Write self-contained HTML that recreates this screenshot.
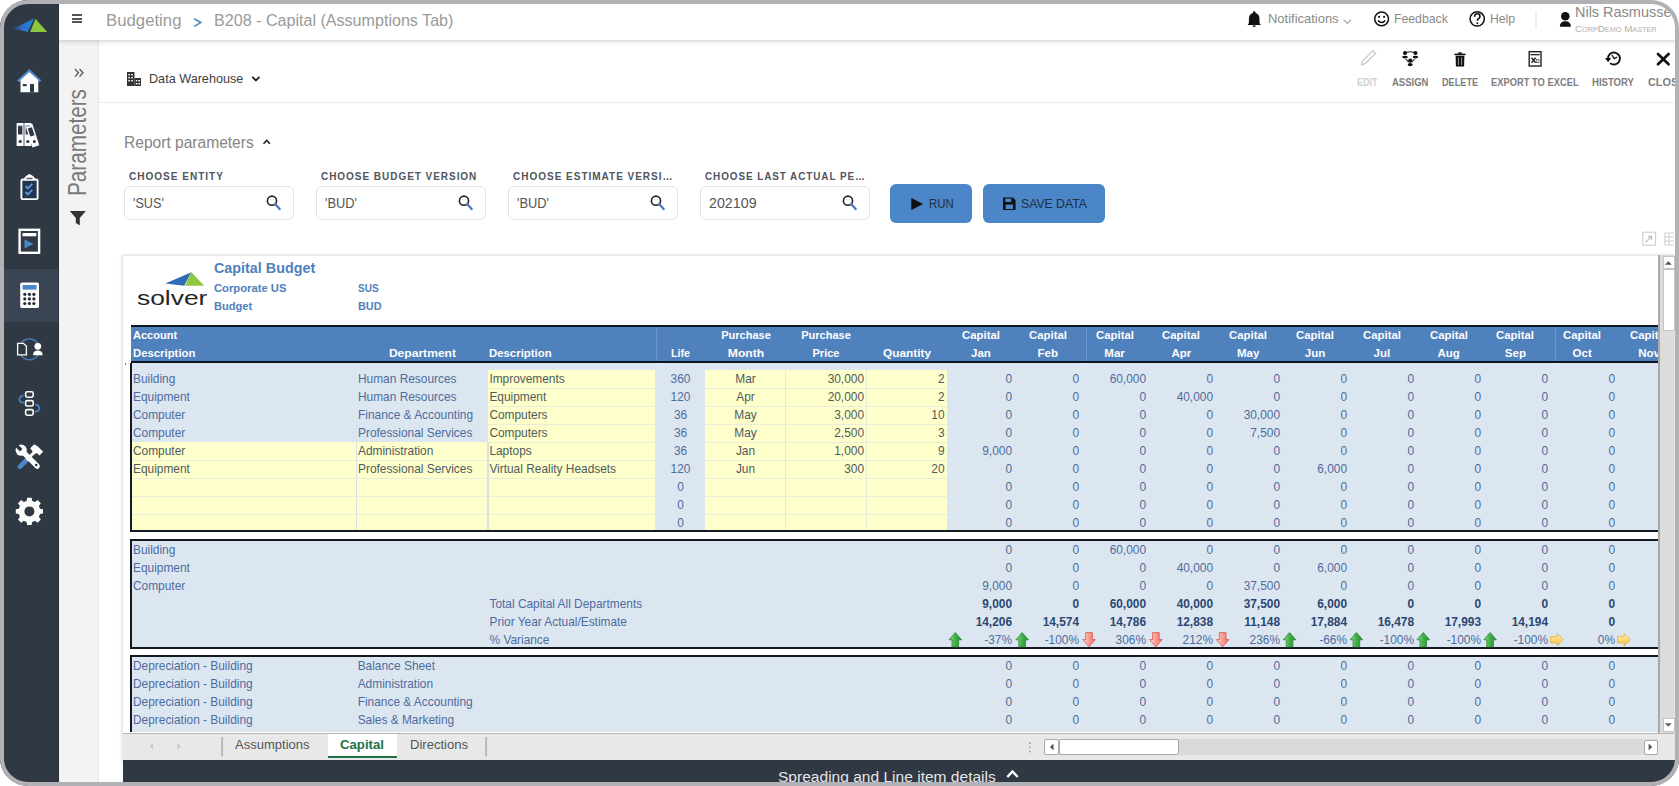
<!DOCTYPE html>
<html><head><meta charset="utf-8"><style>
html,body{margin:0;padding:0;width:1679px;height:786px;overflow:hidden;background:#fff}
.t{position:absolute;white-space:nowrap;font-family:"Liberation Sans",sans-serif}
.r{position:absolute}
#frame{position:absolute;left:0;top:0;width:1679px;height:786px;box-sizing:border-box;border:4px solid #b1b2b6;border-radius:28px;box-shadow:0 0 0 40px #fff;pointer-events:none;z-index:100}
</style></head><body>
<div class="r" style="left:0px;top:0px;width:59px;height:786px;background:#2f3843"></div>
<div class="r" style="left:4px;top:269px;width:55px;height:53px;background:#3a4452"></div>
<div class="r" style="left:57.5px;top:0px;width:1.5px;height:786px;background:#272f38"></div>
<svg class="r" style="left:8px;top:14px" width="44" height="22" viewBox="8 14 44 22">
<defs><linearGradient id="lg1" x1="0" x2="1" y1="0" y2="0"><stop offset="0" stop-color="#2d5fa8" stop-opacity="0.3"/><stop offset="0.45" stop-color="#2f6fd0"/><stop offset="1" stop-color="#1f86d6"/></linearGradient></defs><path d="M12.6 29.1 L34.2 18.4 L27.6 31.9 Q20 29.8 12.6 29.1 Z" fill="url(#lg1)"/><path d="M35.5 18.8 L47.2 32 L30.2 31.9 Z" fill="#8cc63f"/></svg>
<svg class="r" style="left:0;top:0" width="59" height="560" viewBox="0 0 59 560">
<!-- home -->
<path d="M17 80.5 L29.3 69 L41.5 80.5 L39.5 82.3 L29.3 72.8 L19 82.3 Z" fill="#4a86c8"/>
<path d="M20.5 80 L29.3 72 L38.3 80 L38.3 92.3 L20.5 92.3 Z" fill="#fdfdfd"/>
<rect x="30" y="84" width="4" height="8.3" fill="#2f3843"/><rect x="22.8" y="84" width="3.8" height="2.2" fill="#2f3843"/>
<!-- binders -->
<rect x="16.6" y="123" width="7" height="23" fill="#fdfdfd"/><rect x="24.4" y="123" width="7" height="23" fill="#fdfdfd"/>
<rect x="18" y="126" width="4.4" height="8.5" fill="#2f3843"/><rect x="25.6" y="126" width="4.4" height="8.5" fill="#2f3843"/>
<g transform="rotate(-18 37 146)"><rect x="32.2" y="123.5" width="7.2" height="22.5" fill="#fdfdfd"/><rect x="33.6" y="126.5" width="4.4" height="8.5" fill="#2f3843"/><circle cx="35.8" cy="141" r="1.5" fill="#2f3843"/></g>
<path d="M18 126 h4.4 M25.6 126 h4.4" stroke="#4a86c8" stroke-width="1"/>
<circle cx="20.2" cy="141.5" r="1.6" fill="#2f3843"/><circle cx="27.8" cy="141.5" r="1.6" fill="#2f3843"/>
<!-- clipboard -->
<rect x="21.4" y="179.5" width="16.2" height="19.6" rx="1.2" fill="#1f3550" stroke="#fdfdfd" stroke-width="1.9"/>
<path d="M23.5 180.5 Q24 176 29.5 174 Q35 176 35.5 180.5 Z" fill="#fdfdfd"/><rect x="26.5" y="177.8" width="6" height="1.4" fill="#555"/>
<path d="M25.5 186 l2.3 2.3 l4.5 -4.5 M25.5 192 l2.3 2.3 l4.5 -4.5" fill="none" stroke="#5a97d8" stroke-width="1.9"/>
<!-- play -->
<rect x="19.6" y="229.8" width="19.5" height="23" fill="none" stroke="#fdfdfd" stroke-width="2.4"/>
<rect x="22.5" y="233" width="13.8" height="3.3" fill="#fdfdfd"/>
<path d="M24.5 239.3 L33.5 244 L24.5 248.6 Z" fill="#4a86c8"/>
<!-- calculator -->
<rect x="20.2" y="282.6" width="18.8" height="25.4" rx="1.8" fill="#fdfdfd"/>
<rect x="22.6" y="285" width="14" height="4.6" fill="#4a86c8"/>
<g fill="#222a33"><circle cx="24.8" cy="294.3" r="1.6"/><circle cx="29.4" cy="294.3" r="1.6"/><circle cx="33.9" cy="294.3" r="1.6"/>
<circle cx="24.8" cy="298.9" r="1.6"/><circle cx="29.4" cy="298.9" r="1.6"/><circle cx="33.9" cy="298.9" r="1.6"/>
<circle cx="24.8" cy="303.5" r="1.6"/><circle cx="29.4" cy="303.5" r="1.6"/><circle cx="33.9" cy="303.5" r="1.6"/></g>
<!-- doc-user -->
<path d="M20.5 344.2 A10.3 10.3 0 0 1 38.3 344.2 M38.3 354.6 A10.3 10.3 0 0 1 20.5 354.6" fill="none" stroke="#4a86c8" stroke-width="1.5" opacity="0.85"/>
<path d="M17.6 343.3 h5.8 l3 3 v8.6 h-8.8 Z" fill="#2f3843" stroke="#fdfdfd" stroke-width="1.3"/>
<circle cx="37.8" cy="346.3" r="3.4" fill="#fdfdfd"/><path d="M33 355.2 Q33 350.6 37.8 350.6 Q42.6 350.6 42.6 355.2 Z" fill="#fdfdfd"/>
<!-- nodes -->
<path d="M23.5 395.5 Q19 396.5 19.5 400 Q20.5 403 24 402.5 M35.3 404.5 Q39.8 405.5 39.3 409 Q38.3 412 34.8 411.5" fill="none" stroke="#4a86c8" stroke-width="1.8" opacity="0.9"/>
<rect x="25.6" y="391.8" width="7.6" height="5.4" rx="1.6" fill="#2f3843" stroke="#fdfdfd" stroke-width="1.6"/>
<rect x="25.6" y="400.6" width="7.6" height="5.4" rx="1.6" fill="#2f3843" stroke="#fdfdfd" stroke-width="1.6"/>
<rect x="25.6" y="409.6" width="7.6" height="5.6" rx="1.6" fill="#2f3843" stroke="#fdfdfd" stroke-width="1.6"/>
<!-- tools -->
<path d="M20 466.6 L26.6 460" stroke="#4a86c8" stroke-width="4.8" stroke-linecap="round"/>
<path d="M26.6 460 L35.5 451" stroke="#fdfdfd" stroke-width="3"/>
<path d="M30.2 448.3 L34.2 444.3 L37.6 446.2 L43.2 451.8 L39.4 455.6 L36.6 452.8 L34.8 454.6 Z" fill="#fdfdfd"/>
<path d="M21.2 450.2 L37.2 466.2" stroke="#fdfdfd" stroke-width="5.2" stroke-linecap="round"/>
<circle cx="21.2" cy="450.2" r="5.6" fill="#fdfdfd"/>
<path d="M21.2 450.2 L15.8 444.8" stroke="#2f3843" stroke-width="3.6"/>
<circle cx="36.2" cy="465" r="1.3" fill="#2f3843"/>
<!-- gear -->
<g transform="translate(29.4 511.4)">
<path d="M-2.2 -12.5 L2.2 -12.5 L2.8 -9.3 L5.6 -8.2 L8.3 -10.1 L11.4 -7 L9.5 -4.3 L10.6 -1.5 L13.6 -1 L13.6 3.4 L10.6 3.9 L9.5 6.7 L11.4 9.4 L8.3 12.5 L5.6 10.6 L2.8 11.7 L2.2 14.8 L-2.2 14.8 L-2.8 11.7 L-5.6 10.6 L-8.3 12.5 L-11.4 9.4 L-9.5 6.7 L-10.6 3.9 L-13.6 3.4 L-13.6 -1 L-10.6 -1.5 L-9.5 -4.3 L-11.4 -7 L-8.3 -10.1 L-5.6 -8.2 L-2.8 -9.3 Z" fill="#fdfdfd" transform="translate(0 -1.2)"/>
<circle cx="0" cy="0" r="5" fill="#2f3843"/>
</g>
</svg>
<div class="r" style="left:59px;top:0px;width:1620px;height:40px;background:#fff"></div>
<div class="r" style="left:72px;top:14.0px;width:10px;height:2px;background:#555"></div>
<div class="r" style="left:72px;top:17.6px;width:10px;height:2px;background:#555"></div>
<div class="r" style="left:72px;top:21.2px;width:10px;height:2px;background:#555"></div>
<div class="t" style="left:105.5px;top:11.58px;font-size:16.6px;line-height:18.54px;color:#9a9a9a;font-weight:normal;transform:scaleX(1.0098);transform-origin:left center;">Budgeting</div>
<svg class="r" style="left:190px;top:15px" width="16" height="14" viewBox="190 15 16 14"><path d="M194.2 18.8 L200.8 22.6 L194.2 26.4" fill="none" stroke="#4a86c8" stroke-width="1.6"/></svg>
<div class="t" style="left:213.6px;top:12.12px;font-size:16px;line-height:17.87px;color:#9a9a9a;font-weight:normal;transform:scaleX(1.0057);transform-origin:left center;">B208 - Capital (Assumptions Tab)</div>
<div class="r" style="left:59px;top:40px;width:40px;height:746px;background:#f3f3f3;border-right:1px solid #e4e4e4;box-sizing:border-box"></div>
<div class="r" style="left:99px;top:41px;width:1580px;height:745px;background:#fff"></div>
<div class="r" style="left:99px;top:102px;width:1580px;height:1px;background:#ececec"></div>
<div class="r" style="left:59px;top:40px;width:1620px;height:6px;background:linear-gradient(rgba(0,0,0,0.13),rgba(0,0,0,0.04) 50%,rgba(0,0,0,0))"></div>
<svg class="r" style="left:1240px;top:4px" width="440" height="36" viewBox="1240 4 440 36">
<path d="M1254.2 11.3 a1.3 1.3 0 0 1 1.3 1.3 v0.4 q4 1 4 6 v4 l1.3 2 h-13.2 l1.3 -2 v-4 q0 -5 4 -6 v-0.4 a1.3 1.3 0 0 1 1.3 -1.3 Z" fill="#111"/>
<path d="M1252.6 25.4 a1.6 1.6 0 0 0 3.2 0 Z" fill="#111"/>
<path d="M1343.6 19.6 l3.7 3.8 l3.7 -3.8" fill="none" stroke="#aaa" stroke-width="1.3"/>
<circle cx="1381.6" cy="18.8" r="6.9" fill="none" stroke="#111" stroke-width="1.5"/>
<circle cx="1379.1" cy="16.8" r="1.1" fill="#111"/><circle cx="1384.1" cy="16.8" r="1.1" fill="#111"/>
<path d="M1377.9 20.4 q3.7 4 7.4 0" fill="none" stroke="#111" stroke-width="1.5"/>
<circle cx="1477.2" cy="18.9" r="7.1" fill="none" stroke="#111" stroke-width="1.5"/>
<path d="M1474.6 16.8 q0 -3 2.7 -3 q2.7 0 2.7 2.6 q0 1.6 -1.6 2.4 q-1 0.6 -1 2" fill="none" stroke="#111" stroke-width="1.6"/>
<circle cx="1477.3" cy="23.3" r="1" fill="#111"/>
<rect x="1535.5" y="10.5" width="1" height="19" fill="#ddd"/>
<circle cx="1565.3" cy="16.2" r="4.3" fill="#111"/>
<path d="M1559.8 26.8 q0 -5.6 5.5 -5.6 q5.6 0 5.6 5.6 Z" fill="#111"/>
</svg>
<div class="t" style="left:1267.6px;top:12.23px;font-size:13px;line-height:14.52px;color:#8a8a8a;font-weight:normal;transform:scaleX(0.9970);transform-origin:left center;">Notifications</div>
<div class="t" style="left:1394.0px;top:12.23px;font-size:13px;line-height:14.52px;color:#8a8a8a;font-weight:normal;transform:scaleX(0.9423);transform-origin:left center;">Feedback</div>
<div class="t" style="left:1490.3px;top:12.23px;font-size:13px;line-height:14.52px;color:#8a8a8a;font-weight:normal;transform:scaleX(0.9388);transform-origin:left center;">Help</div>
<div class="t" style="left:1574.5px;top:4.66px;font-size:14.3px;line-height:15.97px;color:#8a8a8a;font-weight:normal;transform:scaleX(1.0115);transform-origin:left center;">Nils Rasmussen</div>
<div class="t" style="left:1574.5px;top:24.2px;font-size:9.4px;line-height:10px;color:#b0b0b0;font-variant:small-caps;transform:scaleX(1.04);transform-origin:left center">CorpDemo Master</div>
<svg class="r" style="left:1350px;top:44px" width="330" height="30" viewBox="1350 44 330 30">
<path d="M1361.5 64.7 l1 -3.6 l10.5 -10.5 l2.6 2.6 l-10.5 10.5 Z" fill="none" stroke="#c8c8c8" stroke-width="1.3"/>
<path d="M1406.5 52.6 Q1410.3 50.8 1414 52.6 M1405.8 59 L1408.6 62.2 M1414.6 59 L1411.8 62.2" fill="none" stroke="#222" stroke-width="1.1"/>
<g fill="#111">
<circle cx="1405" cy="53" r="2.1"/><circle cx="1415.4" cy="53" r="2.1"/>
<ellipse cx="1405" cy="57.1" rx="2.8" ry="1.4"/><ellipse cx="1415.4" cy="57.1" rx="2.8" ry="1.4"/>
<circle cx="1410.2" cy="60.7" r="2.1"/><ellipse cx="1410.2" cy="64.6" rx="2.5" ry="1.6"/>
</g>
<g fill="#111"><rect x="1454.5" y="53.6" width="11" height="1.6"/><rect x="1458.3" y="52.3" width="3.4" height="1.6"/>
<path d="M1455.6 55.8 h8.8 l-0.3 10.6 h-8.2 Z"/></g>
<path d="M1458.4 57.3 v7.7 M1461.6 57.3 v7.7" stroke="#9a9a9a" stroke-width="1"/>
<rect x="1529.2" y="51.7" width="11.8" height="14.3" fill="none" stroke="#222" stroke-width="1.4"/>
<rect x="1530.5" y="54" width="9.2" height="1.3" fill="#222"/>
<path d="M1531.6 57.8 L1535.6 62.8 M1535.6 57.8 L1531.6 62.8" stroke="#222" stroke-width="1.5"/>
<rect x="1536.3" y="59.6" width="2.6" height="3" fill="none" stroke="#555" stroke-width="0.8"/>
<path d="M1608 59 A6 6 0 1 1 1610.1 63.1" fill="none" stroke="#111" stroke-width="1.9"/>
<path d="M1605 58 L1611.2 58 L1608.1 62.2 Z" fill="#111"/>
<path d="M1612 55 L1614.2 58.6 L1617.2 57.2" fill="none" stroke="#111" stroke-width="1.3"/>
<path d="M1658 54 L1668.6 64.2 M1668.6 54 L1658 64.2" stroke="#111" stroke-width="2.7" stroke-linecap="round"/>
</svg>
<div class="t" style="left:1357.4px;top:76.92px;font-size:10.7px;line-height:11.95px;color:#cfcfcf;font-weight:bold;transform:scaleX(0.8411);transform-origin:left center;">EDIT</div>
<div class="t" style="left:1391.8px;top:76.92px;font-size:10.7px;line-height:11.95px;color:#7d7d7d;font-weight:bold;transform:scaleX(0.8873);transform-origin:left center;">ASSIGN</div>
<div class="t" style="left:1441.8px;top:76.92px;font-size:10.7px;line-height:11.95px;color:#7d7d7d;font-weight:bold;transform:scaleX(0.8552);transform-origin:left center;">DELETE</div>
<div class="t" style="left:1491.3px;top:76.92px;font-size:10.7px;line-height:11.95px;color:#7d7d7d;font-weight:bold;transform:scaleX(0.8745);transform-origin:left center;">EXPORT TO EXCEL</div>
<div class="t" style="left:1592.0px;top:76.92px;font-size:10.7px;line-height:11.95px;color:#7d7d7d;font-weight:bold;transform:scaleX(0.8942);transform-origin:left center;">HISTORY</div>
<div class="t" style="left:1647.7px;top:76.92px;font-size:10.7px;line-height:11.95px;color:#7d7d7d;font-weight:bold;transform:scaleX(1.0173);transform-origin:left center;">CLOSE</div>
<svg class="r" style="left:120px;top:66px" width="150" height="26" viewBox="120 66 150 26">
<g fill="#333">
<rect x="127" y="72" width="7.5" height="14" />
<rect x="134.5" y="78" width="6.5" height="8" />
</g>
<g fill="#fff"><rect x="128.3" y="74" width="1.6" height="1.4"/><rect x="131.2" y="74" width="1.6" height="1.4"/>
<rect x="128.3" y="77" width="1.6" height="1.4"/><rect x="131.2" y="77" width="1.6" height="1.4"/>
<rect x="128.3" y="80" width="1.6" height="1.4"/><rect x="131.2" y="80" width="1.6" height="1.4"/>
<rect x="135.8" y="80" width="1.6" height="1.4"/><rect x="138.4" y="80" width="1.6" height="1.4"/>
<rect x="135.8" y="83" width="1.6" height="1.4"/><rect x="138.4" y="83" width="1.6" height="1.4"/></g>
<path d="M252.3 76.8 l3.6 3.6 l3.6 -3.6" fill="none" stroke="#222" stroke-width="1.8"/>
</svg>
<div class="t" style="left:149.0px;top:72.23px;font-size:13px;line-height:14.52px;color:#404040;font-weight:normal;transform:scaleX(0.9715);transform-origin:left center;">Data Warehouse</div>
<svg class="r" style="left:59px;top:60px" width="40" height="180" viewBox="59 60 40 180">
<path d="M75 69 l3.5 3.8 l-3.5 3.8 M79.5 69 l3.5 3.8 l-3.5 3.8" fill="none" stroke="#555" stroke-width="1.3"/>
<path d="M69.8 211 h16 l-6 7 v7.3 l-4 -2.3 v-5 Z" fill="#333"/>
</svg>
<div class="t" style="left:66.3px;top:195.8px;font-size:20.7px;line-height:20.7px;color:#7a7a7a;transform:rotate(-90deg) scaleY(1.2);transform-origin:left top">Parameters</div>
<div class="t" style="left:123.6px;top:133.88px;font-size:15.6px;line-height:17.43px;color:#858585;font-weight:normal;transform:scaleX(0.9980);transform-origin:left center;">Report parameters</div>
<svg class="r" style="left:260px;top:136px" width="14" height="12" viewBox="260 136 14 12">
<path d="M263.5 143.8 l3.2 -3.3 l3.2 3.3" fill="none" stroke="#222" stroke-width="1.6"/></svg>
<div class="r" style="left:124px;top:186px;width:170px;height:34px;box-sizing:border-box;border:1.5px solid #e3e3e3;border-radius:6px;background:#fff"></div>
<div class="t" style="left:129.0px;top:171.10px;font-size:10.5px;line-height:11.73px;color:#50565c;font-weight:bold;transform:scaleX(0.9609);transform-origin:left center;letter-spacing:1.0px;">CHOOSE ENTITY</div>
<div class="t" style="left:133.2px;top:195.53px;font-size:14px;line-height:15.64px;color:#555;font-weight:normal;transform:scaleX(0.9023);transform-origin:left center;">'SUS'</div>
<svg class="r" style="left:264.8px;top:193px" width="20" height="22" viewBox="264.8 193 20 22">
<circle cx="271.8" cy="200.7" r="4.6" fill="none" stroke="#222" stroke-width="1.6"/>
<path d="M275.0 204 L279.40000000000003 209" stroke="#4a7bb7" stroke-width="2.4" stroke-linecap="round"/></svg>
<div class="r" style="left:316px;top:186px;width:170px;height:34px;box-sizing:border-box;border:1.5px solid #e3e3e3;border-radius:6px;background:#fff"></div>
<div class="t" style="left:321.0px;top:171.10px;font-size:10.5px;line-height:11.73px;color:#50565c;font-weight:bold;transform:scaleX(0.9534);transform-origin:left center;letter-spacing:1.0px;">CHOOSE BUDGET VERSION</div>
<div class="t" style="left:325.2px;top:195.53px;font-size:14px;line-height:15.64px;color:#555;font-weight:normal;transform:scaleX(0.9167);transform-origin:left center;">'BUD'</div>
<svg class="r" style="left:456.8px;top:193px" width="20" height="22" viewBox="456.8 193 20 22">
<circle cx="463.8" cy="200.7" r="4.6" fill="none" stroke="#222" stroke-width="1.6"/>
<path d="M467.0 204 L471.40000000000003 209" stroke="#4a7bb7" stroke-width="2.4" stroke-linecap="round"/></svg>
<div class="r" style="left:508px;top:186px;width:170px;height:34px;box-sizing:border-box;border:1.5px solid #e3e3e3;border-radius:6px;background:#fff"></div>
<div class="t" style="left:513.0px;top:171.10px;font-size:10.5px;line-height:11.73px;color:#50565c;font-weight:bold;transform:scaleX(0.9573);transform-origin:left center;letter-spacing:1.0px;">CHOOSE ESTIMATE VERSI…</div>
<div class="t" style="left:517.2px;top:195.53px;font-size:14px;line-height:15.64px;color:#555;font-weight:normal;transform:scaleX(0.9167);transform-origin:left center;">'BUD'</div>
<svg class="r" style="left:648.8px;top:193px" width="20" height="22" viewBox="648.8 193 20 22">
<circle cx="655.8" cy="200.7" r="4.6" fill="none" stroke="#222" stroke-width="1.6"/>
<path d="M659.0 204 L663.4 209" stroke="#4a7bb7" stroke-width="2.4" stroke-linecap="round"/></svg>
<div class="r" style="left:700px;top:186px;width:170px;height:34px;box-sizing:border-box;border:1.5px solid #e3e3e3;border-radius:6px;background:#fff"></div>
<div class="t" style="left:705.0px;top:171.10px;font-size:10.5px;line-height:11.73px;color:#50565c;font-weight:bold;transform:scaleX(0.9417);transform-origin:left center;letter-spacing:1.0px;">CHOOSE LAST ACTUAL PE…</div>
<div class="t" style="left:709.2px;top:195.53px;font-size:14px;line-height:15.64px;color:#555;font-weight:normal;transform:scaleX(1.0189);transform-origin:left center;">202109</div>
<svg class="r" style="left:840.8px;top:193px" width="20" height="22" viewBox="840.8 193 20 22">
<circle cx="847.8" cy="200.7" r="4.6" fill="none" stroke="#222" stroke-width="1.6"/>
<path d="M851.0 204 L855.4 209" stroke="#4a7bb7" stroke-width="2.4" stroke-linecap="round"/></svg>
<div class="r" style="left:890px;top:183.5px;width:82px;height:39px;background:#4a86c8;border-radius:6px"></div>
<div class="r" style="left:983px;top:183.5px;width:122px;height:39px;background:#4a86c8;border-radius:6px"></div>
<svg class="r" style="left:900px;top:190px" width="130" height="26" viewBox="900 190 130 26">
<path d="M911.3 198 L923 204 L911.3 210 Z" fill="#111"/>
<path d="M1003 197.5 h9.8 l2.8 2.8 v9.7 h-12.6 Z" fill="#111"/>
<rect x="1005.3" y="198.6" width="6" height="3.4" fill="#4a86c8"/>
<rect x="1005.6" y="204.6" width="7.4" height="4.4" fill="#4a86c8"/>
</svg>
<div class="t" style="left:929.0px;top:196.63px;font-size:13px;line-height:14.52px;color:#1f2f44;font-weight:normal;transform:scaleX(0.8770);transform-origin:left center;">RUN</div>
<div class="t" style="left:1021.3px;top:196.63px;font-size:13px;line-height:14.52px;color:#1f2f44;font-weight:normal;transform:scaleX(0.9404);transform-origin:left center;">SAVE DATA</div>
<div class="r" style="left:123px;top:255.5px;width:1551px;height:505px;background:#fff;box-shadow:0 0 3px 1px rgba(0,0,0,0.16)"></div>
<svg class="r" style="left:160px;top:268px" width="50" height="20" viewBox="160 268 50 20">
<path d="M165.3 283.4 L191.3 272.2 L184.3 285.8 Z" fill="#2e6db4"/>
<path d="M191.3 272.2 L204.2 285.8 L185.2 285.8 Z" fill="#8dc63f"/>
</svg>
<div class="t" style="left:136.6px;top:287.05px;font-size:20.5px;line-height:22.90px;color:#262626;font-weight:normal;transform:scaleX(1.2874);transform-origin:left center;">solver</div>
<div class="t" style="left:213.8px;top:261.46px;font-size:14.3px;line-height:15.97px;color:#4f81bd;font-weight:bold;transform:scaleX(1.0030);transform-origin:left center;">Capital Budget</div>
<div class="t" style="left:213.8px;top:281.59px;font-size:11.5px;line-height:12.85px;color:#4f81bd;font-weight:bold;transform:scaleX(0.9781);transform-origin:left center;">Corporate US</div>
<div class="t" style="left:213.8px;top:299.89px;font-size:11.5px;line-height:12.85px;color:#4f81bd;font-weight:bold;transform:scaleX(0.9645);transform-origin:left center;">Budget</div>
<div class="t" style="left:357.9px;top:281.59px;font-size:11.5px;line-height:12.85px;color:#4f81bd;font-weight:bold;transform:scaleX(0.8754);transform-origin:left center;">SUS</div>
<div class="t" style="left:357.9px;top:299.89px;font-size:11.5px;line-height:12.85px;color:#4f81bd;font-weight:bold;transform:scaleX(0.9472);transform-origin:left center;">BUD</div>
<div class="r" style="left:131px;top:325px;width:1527px;height:2px;background:#0f1722"></div>
<div class="r" style="left:131px;top:327px;width:1527px;height:34px;background:#4f81bd"></div>
<div class="r" style="left:131px;top:360.5px;width:1527px;height:2px;background:#0c1520"></div>
<div class="r" style="left:124.6px;top:363px;width:1.6px;height:1.6px;background:#555;border-radius:1px"></div>
<div class="r" style="left:132px;top:362.5px;width:1526px;height:1.2px;background:#f3f6fa"></div>
<div class="r" style="left:655.5px;top:327px;width:1px;height:33.5px;background:#6a96cc"></div>
<div class="r" style="left:1086px;top:327px;width:1px;height:33.5px;background:#6a96cc"></div>
<div class="r" style="left:1555px;top:327px;width:1px;height:33.5px;background:#6a96cc"></div>
<div class="t" style="left:133.0px;top:329.29px;font-size:11.5px;line-height:12.85px;color:#fdfdfd;font-weight:bold;transform:scaleX(0.9608);transform-origin:left center;">Account</div>
<div class="t" style="left:133.0px;top:347.09px;font-size:11.5px;line-height:12.85px;color:#fdfdfd;font-weight:bold;transform:scaleX(0.9864);transform-origin:left center;">Description</div>
<div class="t" style="left:55.7px;width:400px;text-align:right;top:347.09px;font-size:11.5px;line-height:12.85px;color:#fdfdfd;font-weight:bold;transform:scaleX(1.0500);transform-origin:right center;">Department</div>
<div class="t" style="left:489.4px;top:347.09px;font-size:11.5px;line-height:12.85px;color:#fdfdfd;font-weight:bold;transform:scaleX(0.9895);transform-origin:left center;">Description</div>
<div class="t" style="left:290.0px;width:400px;text-align:right;top:347.09px;font-size:11.5px;line-height:12.85px;color:#fdfdfd;font-weight:bold;transform:scaleX(0.9293);transform-origin:right center;">Life</div>
<div class="t" style="left:545.5px;width:400px;text-align:center;top:329.29px;font-size:11.5px;line-height:12.85px;color:#fdfdfd;font-weight:bold;transform:scaleX(0.9560);transform-origin:center center;">Purchase</div>
<div class="t" style="left:545.5px;width:400px;text-align:center;top:347.09px;font-size:11.5px;line-height:12.85px;color:#fdfdfd;font-weight:bold;transform:scaleX(1.0526);transform-origin:center center;">Month</div>
<div class="t" style="left:626.3px;width:400px;text-align:center;top:329.29px;font-size:11.5px;line-height:12.85px;color:#fdfdfd;font-weight:bold;transform:scaleX(0.9560);transform-origin:center center;">Purchase</div>
<div class="t" style="left:626.3px;width:400px;text-align:center;top:347.09px;font-size:11.5px;line-height:12.85px;color:#fdfdfd;font-weight:bold;transform:scaleX(0.9597);transform-origin:center center;">Price</div>
<div class="t" style="left:707.0px;width:400px;text-align:center;top:347.09px;font-size:11.5px;line-height:12.85px;color:#fdfdfd;font-weight:bold;transform:scaleX(1.0291);transform-origin:center center;">Quantity</div>
<div class="t" style="left:781.0px;width:400px;text-align:center;top:329.29px;font-size:11.5px;line-height:12.85px;color:#fdfdfd;font-weight:bold;transform:scaleX(0.9859);transform-origin:center center;">Capital</div>
<div class="t" style="left:781.0px;width:400px;text-align:center;top:347.09px;font-size:11.5px;line-height:12.85px;color:#fdfdfd;font-weight:bold;">Jan</div>
<div class="t" style="left:847.8px;width:400px;text-align:center;top:329.29px;font-size:11.5px;line-height:12.85px;color:#fdfdfd;font-weight:bold;transform:scaleX(0.9859);transform-origin:center center;">Capital</div>
<div class="t" style="left:847.8px;width:400px;text-align:center;top:347.09px;font-size:11.5px;line-height:12.85px;color:#fdfdfd;font-weight:bold;">Feb</div>
<div class="t" style="left:914.6px;width:400px;text-align:center;top:329.29px;font-size:11.5px;line-height:12.85px;color:#fdfdfd;font-weight:bold;transform:scaleX(0.9859);transform-origin:center center;">Capital</div>
<div class="t" style="left:914.6px;width:400px;text-align:center;top:347.09px;font-size:11.5px;line-height:12.85px;color:#fdfdfd;font-weight:bold;">Mar</div>
<div class="t" style="left:981.4px;width:400px;text-align:center;top:329.29px;font-size:11.5px;line-height:12.85px;color:#fdfdfd;font-weight:bold;transform:scaleX(0.9859);transform-origin:center center;">Capital</div>
<div class="t" style="left:981.4px;width:400px;text-align:center;top:347.09px;font-size:11.5px;line-height:12.85px;color:#fdfdfd;font-weight:bold;">Apr</div>
<div class="t" style="left:1048.2px;width:400px;text-align:center;top:329.29px;font-size:11.5px;line-height:12.85px;color:#fdfdfd;font-weight:bold;transform:scaleX(0.9859);transform-origin:center center;">Capital</div>
<div class="t" style="left:1048.2px;width:400px;text-align:center;top:347.09px;font-size:11.5px;line-height:12.85px;color:#fdfdfd;font-weight:bold;">May</div>
<div class="t" style="left:1115.0px;width:400px;text-align:center;top:329.29px;font-size:11.5px;line-height:12.85px;color:#fdfdfd;font-weight:bold;transform:scaleX(0.9859);transform-origin:center center;">Capital</div>
<div class="t" style="left:1115.0px;width:400px;text-align:center;top:347.09px;font-size:11.5px;line-height:12.85px;color:#fdfdfd;font-weight:bold;">Jun</div>
<div class="t" style="left:1181.8px;width:400px;text-align:center;top:329.29px;font-size:11.5px;line-height:12.85px;color:#fdfdfd;font-weight:bold;transform:scaleX(0.9859);transform-origin:center center;">Capital</div>
<div class="t" style="left:1181.8px;width:400px;text-align:center;top:347.09px;font-size:11.5px;line-height:12.85px;color:#fdfdfd;font-weight:bold;">Jul</div>
<div class="t" style="left:1248.6px;width:400px;text-align:center;top:329.29px;font-size:11.5px;line-height:12.85px;color:#fdfdfd;font-weight:bold;transform:scaleX(0.9859);transform-origin:center center;">Capital</div>
<div class="t" style="left:1248.6px;width:400px;text-align:center;top:347.09px;font-size:11.5px;line-height:12.85px;color:#fdfdfd;font-weight:bold;">Aug</div>
<div class="t" style="left:1315.4px;width:400px;text-align:center;top:329.29px;font-size:11.5px;line-height:12.85px;color:#fdfdfd;font-weight:bold;transform:scaleX(0.9859);transform-origin:center center;">Capital</div>
<div class="t" style="left:1315.4px;width:400px;text-align:center;top:347.09px;font-size:11.5px;line-height:12.85px;color:#fdfdfd;font-weight:bold;">Sep</div>
<div class="t" style="left:1382.2px;width:400px;text-align:center;top:329.29px;font-size:11.5px;line-height:12.85px;color:#fdfdfd;font-weight:bold;transform:scaleX(0.9859);transform-origin:center center;">Capital</div>
<div class="t" style="left:1382.2px;width:400px;text-align:center;top:347.09px;font-size:11.5px;line-height:12.85px;color:#fdfdfd;font-weight:bold;">Oct</div>
<div class="t" style="left:1449.0px;width:400px;text-align:center;top:329.29px;font-size:11.5px;line-height:12.85px;color:#fdfdfd;font-weight:bold;transform:scaleX(0.9859);transform-origin:center center;">Capital</div>
<div class="t" style="left:1449.0px;width:400px;text-align:center;top:347.09px;font-size:11.5px;line-height:12.85px;color:#fdfdfd;font-weight:bold;">Nov</div>
<div class="r" style="left:130px;top:362.5px;width:1528px;height:169px;background:#dce6f1"></div>
<div class="r" style="left:130px;top:362.5px;width:2px;height:169px;background:#141a22"></div>
<div class="r" style="left:488px;top:370px;width:167px;height:159.5px;background:#ffffcc"></div>
<div class="r" style="left:705px;top:370px;width:242px;height:159.5px;background:#ffffcc"></div>
<div class="r" style="left:132px;top:442px;width:355px;height:87.5px;background:#ffffcc"></div>
<div class="r" style="left:488px;top:388px;width:167px;height:1px;background:#e9ecd8"></div>
<div class="r" style="left:705px;top:388px;width:242px;height:1px;background:#e9ecd8"></div>
<div class="r" style="left:488px;top:406px;width:167px;height:1px;background:#e9ecd8"></div>
<div class="r" style="left:705px;top:406px;width:242px;height:1px;background:#e9ecd8"></div>
<div class="r" style="left:488px;top:424px;width:167px;height:1px;background:#e9ecd8"></div>
<div class="r" style="left:705px;top:424px;width:242px;height:1px;background:#e9ecd8"></div>
<div class="r" style="left:488px;top:442px;width:167px;height:1px;background:#e9ecd8"></div>
<div class="r" style="left:705px;top:442px;width:242px;height:1px;background:#e9ecd8"></div>
<div class="r" style="left:488px;top:460px;width:167px;height:1px;background:#e9ecd8"></div>
<div class="r" style="left:705px;top:460px;width:242px;height:1px;background:#e9ecd8"></div>
<div class="r" style="left:132px;top:460px;width:355px;height:1px;background:#e9ecd8"></div>
<div class="r" style="left:488px;top:478px;width:167px;height:1px;background:#e9ecd8"></div>
<div class="r" style="left:705px;top:478px;width:242px;height:1px;background:#e9ecd8"></div>
<div class="r" style="left:132px;top:478px;width:355px;height:1px;background:#e9ecd8"></div>
<div class="r" style="left:488px;top:496px;width:167px;height:1px;background:#e9ecd8"></div>
<div class="r" style="left:705px;top:496px;width:242px;height:1px;background:#e9ecd8"></div>
<div class="r" style="left:132px;top:496px;width:355px;height:1px;background:#e9ecd8"></div>
<div class="r" style="left:488px;top:514px;width:167px;height:1px;background:#e9ecd8"></div>
<div class="r" style="left:705px;top:514px;width:242px;height:1px;background:#e9ecd8"></div>
<div class="r" style="left:132px;top:514px;width:355px;height:1px;background:#e9ecd8"></div>
<div class="r" style="left:785px;top:370px;width:1px;height:159.5px;background:#e3e7dc"></div>
<div class="r" style="left:866px;top:370px;width:1px;height:159.5px;background:#e3e7dc"></div>
<div class="r" style="left:355.5px;top:442px;width:1.5px;height:87.5px;background:#d9e0e8"></div>
<div class="r" style="left:487px;top:442px;width:1.5px;height:87.5px;background:#d9e0e8"></div>
<div class="r" style="left:130px;top:529.5px;width:1528px;height:2px;background:#141a22"></div>
<div class="t" style="left:133.0px;top:372.53px;font-size:11.9px;line-height:13.29px;color:#4d6c9d;font-weight:normal;">Building</div>
<div class="t" style="left:358.0px;top:372.53px;font-size:11.9px;line-height:13.29px;color:#4d6c9d;font-weight:normal;">Human Resources</div>
<div class="t" style="left:489.4px;top:372.53px;font-size:11.9px;line-height:13.29px;color:#4e5b5f;font-weight:normal;">Improvements</div>
<div class="t" style="left:480.5px;width:400px;text-align:center;top:372.53px;font-size:11.9px;line-height:13.29px;color:#4d6c9d;font-weight:normal;">360</div>
<div class="t" style="left:545.5px;width:400px;text-align:center;top:372.53px;font-size:11.9px;line-height:13.29px;color:#4e5b5f;font-weight:normal;">Mar</div>
<div class="t" style="left:464.0px;width:400px;text-align:right;top:372.53px;font-size:11.9px;line-height:13.29px;color:#4e5b5f;font-weight:normal;">30,000</div>
<div class="t" style="left:544.5px;width:400px;text-align:right;top:372.53px;font-size:11.9px;line-height:13.29px;color:#4e5b5f;font-weight:normal;">2</div>
<div class="t" style="left:612.0px;width:400px;text-align:right;top:372.53px;font-size:11.9px;line-height:13.29px;color:#4d6c9d;font-weight:normal;">0</div>
<div class="t" style="left:679.0px;width:400px;text-align:right;top:372.53px;font-size:11.9px;line-height:13.29px;color:#4d6c9d;font-weight:normal;">0</div>
<div class="t" style="left:746.0px;width:400px;text-align:right;top:372.53px;font-size:11.9px;line-height:13.29px;color:#4d6c9d;font-weight:normal;">60,000</div>
<div class="t" style="left:813.0px;width:400px;text-align:right;top:372.53px;font-size:11.9px;line-height:13.29px;color:#4d6c9d;font-weight:normal;">0</div>
<div class="t" style="left:880.0px;width:400px;text-align:right;top:372.53px;font-size:11.9px;line-height:13.29px;color:#4d6c9d;font-weight:normal;">0</div>
<div class="t" style="left:947.0px;width:400px;text-align:right;top:372.53px;font-size:11.9px;line-height:13.29px;color:#4d6c9d;font-weight:normal;">0</div>
<div class="t" style="left:1014.0px;width:400px;text-align:right;top:372.53px;font-size:11.9px;line-height:13.29px;color:#4d6c9d;font-weight:normal;">0</div>
<div class="t" style="left:1081.0px;width:400px;text-align:right;top:372.53px;font-size:11.9px;line-height:13.29px;color:#4d6c9d;font-weight:normal;">0</div>
<div class="t" style="left:1148.0px;width:400px;text-align:right;top:372.53px;font-size:11.9px;line-height:13.29px;color:#4d6c9d;font-weight:normal;">0</div>
<div class="t" style="left:1215.0px;width:400px;text-align:right;top:372.53px;font-size:11.9px;line-height:13.29px;color:#4d6c9d;font-weight:normal;">0</div>
<div class="t" style="left:133.0px;top:390.53px;font-size:11.9px;line-height:13.29px;color:#4d6c9d;font-weight:normal;">Equipment</div>
<div class="t" style="left:358.0px;top:390.53px;font-size:11.9px;line-height:13.29px;color:#4d6c9d;font-weight:normal;">Human Resources</div>
<div class="t" style="left:489.4px;top:390.53px;font-size:11.9px;line-height:13.29px;color:#4e5b5f;font-weight:normal;">Equipment</div>
<div class="t" style="left:480.5px;width:400px;text-align:center;top:390.53px;font-size:11.9px;line-height:13.29px;color:#4d6c9d;font-weight:normal;">120</div>
<div class="t" style="left:545.5px;width:400px;text-align:center;top:390.53px;font-size:11.9px;line-height:13.29px;color:#4e5b5f;font-weight:normal;">Apr</div>
<div class="t" style="left:464.0px;width:400px;text-align:right;top:390.53px;font-size:11.9px;line-height:13.29px;color:#4e5b5f;font-weight:normal;">20,000</div>
<div class="t" style="left:544.5px;width:400px;text-align:right;top:390.53px;font-size:11.9px;line-height:13.29px;color:#4e5b5f;font-weight:normal;">2</div>
<div class="t" style="left:612.0px;width:400px;text-align:right;top:390.53px;font-size:11.9px;line-height:13.29px;color:#4d6c9d;font-weight:normal;">0</div>
<div class="t" style="left:679.0px;width:400px;text-align:right;top:390.53px;font-size:11.9px;line-height:13.29px;color:#4d6c9d;font-weight:normal;">0</div>
<div class="t" style="left:746.0px;width:400px;text-align:right;top:390.53px;font-size:11.9px;line-height:13.29px;color:#4d6c9d;font-weight:normal;">0</div>
<div class="t" style="left:813.0px;width:400px;text-align:right;top:390.53px;font-size:11.9px;line-height:13.29px;color:#4d6c9d;font-weight:normal;">40,000</div>
<div class="t" style="left:880.0px;width:400px;text-align:right;top:390.53px;font-size:11.9px;line-height:13.29px;color:#4d6c9d;font-weight:normal;">0</div>
<div class="t" style="left:947.0px;width:400px;text-align:right;top:390.53px;font-size:11.9px;line-height:13.29px;color:#4d6c9d;font-weight:normal;">0</div>
<div class="t" style="left:1014.0px;width:400px;text-align:right;top:390.53px;font-size:11.9px;line-height:13.29px;color:#4d6c9d;font-weight:normal;">0</div>
<div class="t" style="left:1081.0px;width:400px;text-align:right;top:390.53px;font-size:11.9px;line-height:13.29px;color:#4d6c9d;font-weight:normal;">0</div>
<div class="t" style="left:1148.0px;width:400px;text-align:right;top:390.53px;font-size:11.9px;line-height:13.29px;color:#4d6c9d;font-weight:normal;">0</div>
<div class="t" style="left:1215.0px;width:400px;text-align:right;top:390.53px;font-size:11.9px;line-height:13.29px;color:#4d6c9d;font-weight:normal;">0</div>
<div class="t" style="left:133.0px;top:408.53px;font-size:11.9px;line-height:13.29px;color:#4d6c9d;font-weight:normal;">Computer</div>
<div class="t" style="left:358.0px;top:408.53px;font-size:11.9px;line-height:13.29px;color:#4d6c9d;font-weight:normal;">Finance &amp; Accounting</div>
<div class="t" style="left:489.4px;top:408.53px;font-size:11.9px;line-height:13.29px;color:#4e5b5f;font-weight:normal;">Computers</div>
<div class="t" style="left:480.5px;width:400px;text-align:center;top:408.53px;font-size:11.9px;line-height:13.29px;color:#4d6c9d;font-weight:normal;">36</div>
<div class="t" style="left:545.5px;width:400px;text-align:center;top:408.53px;font-size:11.9px;line-height:13.29px;color:#4e5b5f;font-weight:normal;">May</div>
<div class="t" style="left:464.0px;width:400px;text-align:right;top:408.53px;font-size:11.9px;line-height:13.29px;color:#4e5b5f;font-weight:normal;">3,000</div>
<div class="t" style="left:544.5px;width:400px;text-align:right;top:408.53px;font-size:11.9px;line-height:13.29px;color:#4e5b5f;font-weight:normal;">10</div>
<div class="t" style="left:612.0px;width:400px;text-align:right;top:408.53px;font-size:11.9px;line-height:13.29px;color:#4d6c9d;font-weight:normal;">0</div>
<div class="t" style="left:679.0px;width:400px;text-align:right;top:408.53px;font-size:11.9px;line-height:13.29px;color:#4d6c9d;font-weight:normal;">0</div>
<div class="t" style="left:746.0px;width:400px;text-align:right;top:408.53px;font-size:11.9px;line-height:13.29px;color:#4d6c9d;font-weight:normal;">0</div>
<div class="t" style="left:813.0px;width:400px;text-align:right;top:408.53px;font-size:11.9px;line-height:13.29px;color:#4d6c9d;font-weight:normal;">0</div>
<div class="t" style="left:880.0px;width:400px;text-align:right;top:408.53px;font-size:11.9px;line-height:13.29px;color:#4d6c9d;font-weight:normal;">30,000</div>
<div class="t" style="left:947.0px;width:400px;text-align:right;top:408.53px;font-size:11.9px;line-height:13.29px;color:#4d6c9d;font-weight:normal;">0</div>
<div class="t" style="left:1014.0px;width:400px;text-align:right;top:408.53px;font-size:11.9px;line-height:13.29px;color:#4d6c9d;font-weight:normal;">0</div>
<div class="t" style="left:1081.0px;width:400px;text-align:right;top:408.53px;font-size:11.9px;line-height:13.29px;color:#4d6c9d;font-weight:normal;">0</div>
<div class="t" style="left:1148.0px;width:400px;text-align:right;top:408.53px;font-size:11.9px;line-height:13.29px;color:#4d6c9d;font-weight:normal;">0</div>
<div class="t" style="left:1215.0px;width:400px;text-align:right;top:408.53px;font-size:11.9px;line-height:13.29px;color:#4d6c9d;font-weight:normal;">0</div>
<div class="t" style="left:133.0px;top:426.53px;font-size:11.9px;line-height:13.29px;color:#4d6c9d;font-weight:normal;">Computer</div>
<div class="t" style="left:358.0px;top:426.53px;font-size:11.9px;line-height:13.29px;color:#4d6c9d;font-weight:normal;">Professional Services</div>
<div class="t" style="left:489.4px;top:426.53px;font-size:11.9px;line-height:13.29px;color:#4e5b5f;font-weight:normal;">Computers</div>
<div class="t" style="left:480.5px;width:400px;text-align:center;top:426.53px;font-size:11.9px;line-height:13.29px;color:#4d6c9d;font-weight:normal;">36</div>
<div class="t" style="left:545.5px;width:400px;text-align:center;top:426.53px;font-size:11.9px;line-height:13.29px;color:#4e5b5f;font-weight:normal;">May</div>
<div class="t" style="left:464.0px;width:400px;text-align:right;top:426.53px;font-size:11.9px;line-height:13.29px;color:#4e5b5f;font-weight:normal;">2,500</div>
<div class="t" style="left:544.5px;width:400px;text-align:right;top:426.53px;font-size:11.9px;line-height:13.29px;color:#4e5b5f;font-weight:normal;">3</div>
<div class="t" style="left:612.0px;width:400px;text-align:right;top:426.53px;font-size:11.9px;line-height:13.29px;color:#4d6c9d;font-weight:normal;">0</div>
<div class="t" style="left:679.0px;width:400px;text-align:right;top:426.53px;font-size:11.9px;line-height:13.29px;color:#4d6c9d;font-weight:normal;">0</div>
<div class="t" style="left:746.0px;width:400px;text-align:right;top:426.53px;font-size:11.9px;line-height:13.29px;color:#4d6c9d;font-weight:normal;">0</div>
<div class="t" style="left:813.0px;width:400px;text-align:right;top:426.53px;font-size:11.9px;line-height:13.29px;color:#4d6c9d;font-weight:normal;">0</div>
<div class="t" style="left:880.0px;width:400px;text-align:right;top:426.53px;font-size:11.9px;line-height:13.29px;color:#4d6c9d;font-weight:normal;">7,500</div>
<div class="t" style="left:947.0px;width:400px;text-align:right;top:426.53px;font-size:11.9px;line-height:13.29px;color:#4d6c9d;font-weight:normal;">0</div>
<div class="t" style="left:1014.0px;width:400px;text-align:right;top:426.53px;font-size:11.9px;line-height:13.29px;color:#4d6c9d;font-weight:normal;">0</div>
<div class="t" style="left:1081.0px;width:400px;text-align:right;top:426.53px;font-size:11.9px;line-height:13.29px;color:#4d6c9d;font-weight:normal;">0</div>
<div class="t" style="left:1148.0px;width:400px;text-align:right;top:426.53px;font-size:11.9px;line-height:13.29px;color:#4d6c9d;font-weight:normal;">0</div>
<div class="t" style="left:1215.0px;width:400px;text-align:right;top:426.53px;font-size:11.9px;line-height:13.29px;color:#4d6c9d;font-weight:normal;">0</div>
<div class="t" style="left:133.0px;top:444.53px;font-size:11.9px;line-height:13.29px;color:#4e5b5f;font-weight:normal;">Computer</div>
<div class="t" style="left:358.0px;top:444.53px;font-size:11.9px;line-height:13.29px;color:#4e5b5f;font-weight:normal;">Administration</div>
<div class="t" style="left:489.4px;top:444.53px;font-size:11.9px;line-height:13.29px;color:#4e5b5f;font-weight:normal;">Laptops</div>
<div class="t" style="left:480.5px;width:400px;text-align:center;top:444.53px;font-size:11.9px;line-height:13.29px;color:#4d6c9d;font-weight:normal;">36</div>
<div class="t" style="left:545.5px;width:400px;text-align:center;top:444.53px;font-size:11.9px;line-height:13.29px;color:#4e5b5f;font-weight:normal;">Jan</div>
<div class="t" style="left:464.0px;width:400px;text-align:right;top:444.53px;font-size:11.9px;line-height:13.29px;color:#4e5b5f;font-weight:normal;">1,000</div>
<div class="t" style="left:544.5px;width:400px;text-align:right;top:444.53px;font-size:11.9px;line-height:13.29px;color:#4e5b5f;font-weight:normal;">9</div>
<div class="t" style="left:612.0px;width:400px;text-align:right;top:444.53px;font-size:11.9px;line-height:13.29px;color:#4d6c9d;font-weight:normal;">9,000</div>
<div class="t" style="left:679.0px;width:400px;text-align:right;top:444.53px;font-size:11.9px;line-height:13.29px;color:#4d6c9d;font-weight:normal;">0</div>
<div class="t" style="left:746.0px;width:400px;text-align:right;top:444.53px;font-size:11.9px;line-height:13.29px;color:#4d6c9d;font-weight:normal;">0</div>
<div class="t" style="left:813.0px;width:400px;text-align:right;top:444.53px;font-size:11.9px;line-height:13.29px;color:#4d6c9d;font-weight:normal;">0</div>
<div class="t" style="left:880.0px;width:400px;text-align:right;top:444.53px;font-size:11.9px;line-height:13.29px;color:#4d6c9d;font-weight:normal;">0</div>
<div class="t" style="left:947.0px;width:400px;text-align:right;top:444.53px;font-size:11.9px;line-height:13.29px;color:#4d6c9d;font-weight:normal;">0</div>
<div class="t" style="left:1014.0px;width:400px;text-align:right;top:444.53px;font-size:11.9px;line-height:13.29px;color:#4d6c9d;font-weight:normal;">0</div>
<div class="t" style="left:1081.0px;width:400px;text-align:right;top:444.53px;font-size:11.9px;line-height:13.29px;color:#4d6c9d;font-weight:normal;">0</div>
<div class="t" style="left:1148.0px;width:400px;text-align:right;top:444.53px;font-size:11.9px;line-height:13.29px;color:#4d6c9d;font-weight:normal;">0</div>
<div class="t" style="left:1215.0px;width:400px;text-align:right;top:444.53px;font-size:11.9px;line-height:13.29px;color:#4d6c9d;font-weight:normal;">0</div>
<div class="t" style="left:133.0px;top:462.53px;font-size:11.9px;line-height:13.29px;color:#4e5b5f;font-weight:normal;">Equipment</div>
<div class="t" style="left:358.0px;top:462.53px;font-size:11.9px;line-height:13.29px;color:#4e5b5f;font-weight:normal;">Professional Services</div>
<div class="t" style="left:489.4px;top:462.53px;font-size:11.9px;line-height:13.29px;color:#4e5b5f;font-weight:normal;">Virtual Reality Headsets</div>
<div class="t" style="left:480.5px;width:400px;text-align:center;top:462.53px;font-size:11.9px;line-height:13.29px;color:#4d6c9d;font-weight:normal;">120</div>
<div class="t" style="left:545.5px;width:400px;text-align:center;top:462.53px;font-size:11.9px;line-height:13.29px;color:#4e5b5f;font-weight:normal;">Jun</div>
<div class="t" style="left:464.0px;width:400px;text-align:right;top:462.53px;font-size:11.9px;line-height:13.29px;color:#4e5b5f;font-weight:normal;">300</div>
<div class="t" style="left:544.5px;width:400px;text-align:right;top:462.53px;font-size:11.9px;line-height:13.29px;color:#4e5b5f;font-weight:normal;">20</div>
<div class="t" style="left:612.0px;width:400px;text-align:right;top:462.53px;font-size:11.9px;line-height:13.29px;color:#4d6c9d;font-weight:normal;">0</div>
<div class="t" style="left:679.0px;width:400px;text-align:right;top:462.53px;font-size:11.9px;line-height:13.29px;color:#4d6c9d;font-weight:normal;">0</div>
<div class="t" style="left:746.0px;width:400px;text-align:right;top:462.53px;font-size:11.9px;line-height:13.29px;color:#4d6c9d;font-weight:normal;">0</div>
<div class="t" style="left:813.0px;width:400px;text-align:right;top:462.53px;font-size:11.9px;line-height:13.29px;color:#4d6c9d;font-weight:normal;">0</div>
<div class="t" style="left:880.0px;width:400px;text-align:right;top:462.53px;font-size:11.9px;line-height:13.29px;color:#4d6c9d;font-weight:normal;">0</div>
<div class="t" style="left:947.0px;width:400px;text-align:right;top:462.53px;font-size:11.9px;line-height:13.29px;color:#4d6c9d;font-weight:normal;">6,000</div>
<div class="t" style="left:1014.0px;width:400px;text-align:right;top:462.53px;font-size:11.9px;line-height:13.29px;color:#4d6c9d;font-weight:normal;">0</div>
<div class="t" style="left:1081.0px;width:400px;text-align:right;top:462.53px;font-size:11.9px;line-height:13.29px;color:#4d6c9d;font-weight:normal;">0</div>
<div class="t" style="left:1148.0px;width:400px;text-align:right;top:462.53px;font-size:11.9px;line-height:13.29px;color:#4d6c9d;font-weight:normal;">0</div>
<div class="t" style="left:1215.0px;width:400px;text-align:right;top:462.53px;font-size:11.9px;line-height:13.29px;color:#4d6c9d;font-weight:normal;">0</div>
<div class="t" style="left:480.5px;width:400px;text-align:center;top:480.53px;font-size:11.9px;line-height:13.29px;color:#4d6c9d;font-weight:normal;">0</div>
<div class="t" style="left:612.0px;width:400px;text-align:right;top:480.53px;font-size:11.9px;line-height:13.29px;color:#4d6c9d;font-weight:normal;">0</div>
<div class="t" style="left:679.0px;width:400px;text-align:right;top:480.53px;font-size:11.9px;line-height:13.29px;color:#4d6c9d;font-weight:normal;">0</div>
<div class="t" style="left:746.0px;width:400px;text-align:right;top:480.53px;font-size:11.9px;line-height:13.29px;color:#4d6c9d;font-weight:normal;">0</div>
<div class="t" style="left:813.0px;width:400px;text-align:right;top:480.53px;font-size:11.9px;line-height:13.29px;color:#4d6c9d;font-weight:normal;">0</div>
<div class="t" style="left:880.0px;width:400px;text-align:right;top:480.53px;font-size:11.9px;line-height:13.29px;color:#4d6c9d;font-weight:normal;">0</div>
<div class="t" style="left:947.0px;width:400px;text-align:right;top:480.53px;font-size:11.9px;line-height:13.29px;color:#4d6c9d;font-weight:normal;">0</div>
<div class="t" style="left:1014.0px;width:400px;text-align:right;top:480.53px;font-size:11.9px;line-height:13.29px;color:#4d6c9d;font-weight:normal;">0</div>
<div class="t" style="left:1081.0px;width:400px;text-align:right;top:480.53px;font-size:11.9px;line-height:13.29px;color:#4d6c9d;font-weight:normal;">0</div>
<div class="t" style="left:1148.0px;width:400px;text-align:right;top:480.53px;font-size:11.9px;line-height:13.29px;color:#4d6c9d;font-weight:normal;">0</div>
<div class="t" style="left:1215.0px;width:400px;text-align:right;top:480.53px;font-size:11.9px;line-height:13.29px;color:#4d6c9d;font-weight:normal;">0</div>
<div class="t" style="left:480.5px;width:400px;text-align:center;top:498.53px;font-size:11.9px;line-height:13.29px;color:#4d6c9d;font-weight:normal;">0</div>
<div class="t" style="left:612.0px;width:400px;text-align:right;top:498.53px;font-size:11.9px;line-height:13.29px;color:#4d6c9d;font-weight:normal;">0</div>
<div class="t" style="left:679.0px;width:400px;text-align:right;top:498.53px;font-size:11.9px;line-height:13.29px;color:#4d6c9d;font-weight:normal;">0</div>
<div class="t" style="left:746.0px;width:400px;text-align:right;top:498.53px;font-size:11.9px;line-height:13.29px;color:#4d6c9d;font-weight:normal;">0</div>
<div class="t" style="left:813.0px;width:400px;text-align:right;top:498.53px;font-size:11.9px;line-height:13.29px;color:#4d6c9d;font-weight:normal;">0</div>
<div class="t" style="left:880.0px;width:400px;text-align:right;top:498.53px;font-size:11.9px;line-height:13.29px;color:#4d6c9d;font-weight:normal;">0</div>
<div class="t" style="left:947.0px;width:400px;text-align:right;top:498.53px;font-size:11.9px;line-height:13.29px;color:#4d6c9d;font-weight:normal;">0</div>
<div class="t" style="left:1014.0px;width:400px;text-align:right;top:498.53px;font-size:11.9px;line-height:13.29px;color:#4d6c9d;font-weight:normal;">0</div>
<div class="t" style="left:1081.0px;width:400px;text-align:right;top:498.53px;font-size:11.9px;line-height:13.29px;color:#4d6c9d;font-weight:normal;">0</div>
<div class="t" style="left:1148.0px;width:400px;text-align:right;top:498.53px;font-size:11.9px;line-height:13.29px;color:#4d6c9d;font-weight:normal;">0</div>
<div class="t" style="left:1215.0px;width:400px;text-align:right;top:498.53px;font-size:11.9px;line-height:13.29px;color:#4d6c9d;font-weight:normal;">0</div>
<div class="t" style="left:480.5px;width:400px;text-align:center;top:516.53px;font-size:11.9px;line-height:13.29px;color:#4d6c9d;font-weight:normal;">0</div>
<div class="t" style="left:612.0px;width:400px;text-align:right;top:516.53px;font-size:11.9px;line-height:13.29px;color:#4d6c9d;font-weight:normal;">0</div>
<div class="t" style="left:679.0px;width:400px;text-align:right;top:516.53px;font-size:11.9px;line-height:13.29px;color:#4d6c9d;font-weight:normal;">0</div>
<div class="t" style="left:746.0px;width:400px;text-align:right;top:516.53px;font-size:11.9px;line-height:13.29px;color:#4d6c9d;font-weight:normal;">0</div>
<div class="t" style="left:813.0px;width:400px;text-align:right;top:516.53px;font-size:11.9px;line-height:13.29px;color:#4d6c9d;font-weight:normal;">0</div>
<div class="t" style="left:880.0px;width:400px;text-align:right;top:516.53px;font-size:11.9px;line-height:13.29px;color:#4d6c9d;font-weight:normal;">0</div>
<div class="t" style="left:947.0px;width:400px;text-align:right;top:516.53px;font-size:11.9px;line-height:13.29px;color:#4d6c9d;font-weight:normal;">0</div>
<div class="t" style="left:1014.0px;width:400px;text-align:right;top:516.53px;font-size:11.9px;line-height:13.29px;color:#4d6c9d;font-weight:normal;">0</div>
<div class="t" style="left:1081.0px;width:400px;text-align:right;top:516.53px;font-size:11.9px;line-height:13.29px;color:#4d6c9d;font-weight:normal;">0</div>
<div class="t" style="left:1148.0px;width:400px;text-align:right;top:516.53px;font-size:11.9px;line-height:13.29px;color:#4d6c9d;font-weight:normal;">0</div>
<div class="t" style="left:1215.0px;width:400px;text-align:right;top:516.53px;font-size:11.9px;line-height:13.29px;color:#4d6c9d;font-weight:normal;">0</div>
<div class="r" style="left:130px;top:539px;width:1528px;height:108px;background:#dce6f1"></div>
<div class="r" style="left:130px;top:539px;width:1528px;height:2px;background:#141a22"></div>
<div class="r" style="left:130px;top:539px;width:2px;height:109.8px;background:#141a22"></div>
<div class="r" style="left:130px;top:646.8px;width:1528px;height:2px;background:#141a22"></div>
<div class="t" style="left:133.0px;top:543.73px;font-size:11.9px;line-height:13.29px;color:#4d6c9d;font-weight:normal;">Building</div>
<div class="t" style="left:133.0px;top:561.73px;font-size:11.9px;line-height:13.29px;color:#4d6c9d;font-weight:normal;">Equipment</div>
<div class="t" style="left:133.0px;top:579.73px;font-size:11.9px;line-height:13.29px;color:#4d6c9d;font-weight:normal;">Computer</div>
<div class="t" style="left:489.5px;top:597.73px;font-size:11.9px;line-height:13.29px;color:#4d6c9d;font-weight:normal;">Total Capital All Departments</div>
<div class="t" style="left:489.5px;top:615.73px;font-size:11.9px;line-height:13.29px;color:#4d6c9d;font-weight:normal;">Prior Year Actual/Estimate</div>
<div class="t" style="left:489.5px;top:633.73px;font-size:11.9px;line-height:13.29px;color:#4d6c9d;font-weight:normal;">% Variance</div>
<div class="t" style="left:612.0px;width:400px;text-align:right;top:543.73px;font-size:11.9px;line-height:13.29px;color:#4d6c9d;font-weight:normal;">0</div>
<div class="t" style="left:679.0px;width:400px;text-align:right;top:543.73px;font-size:11.9px;line-height:13.29px;color:#4d6c9d;font-weight:normal;">0</div>
<div class="t" style="left:746.0px;width:400px;text-align:right;top:543.73px;font-size:11.9px;line-height:13.29px;color:#4d6c9d;font-weight:normal;">60,000</div>
<div class="t" style="left:813.0px;width:400px;text-align:right;top:543.73px;font-size:11.9px;line-height:13.29px;color:#4d6c9d;font-weight:normal;">0</div>
<div class="t" style="left:880.0px;width:400px;text-align:right;top:543.73px;font-size:11.9px;line-height:13.29px;color:#4d6c9d;font-weight:normal;">0</div>
<div class="t" style="left:947.0px;width:400px;text-align:right;top:543.73px;font-size:11.9px;line-height:13.29px;color:#4d6c9d;font-weight:normal;">0</div>
<div class="t" style="left:1014.0px;width:400px;text-align:right;top:543.73px;font-size:11.9px;line-height:13.29px;color:#4d6c9d;font-weight:normal;">0</div>
<div class="t" style="left:1081.0px;width:400px;text-align:right;top:543.73px;font-size:11.9px;line-height:13.29px;color:#4d6c9d;font-weight:normal;">0</div>
<div class="t" style="left:1148.0px;width:400px;text-align:right;top:543.73px;font-size:11.9px;line-height:13.29px;color:#4d6c9d;font-weight:normal;">0</div>
<div class="t" style="left:1215.0px;width:400px;text-align:right;top:543.73px;font-size:11.9px;line-height:13.29px;color:#4d6c9d;font-weight:normal;">0</div>
<div class="t" style="left:612.0px;width:400px;text-align:right;top:561.73px;font-size:11.9px;line-height:13.29px;color:#4d6c9d;font-weight:normal;">0</div>
<div class="t" style="left:679.0px;width:400px;text-align:right;top:561.73px;font-size:11.9px;line-height:13.29px;color:#4d6c9d;font-weight:normal;">0</div>
<div class="t" style="left:746.0px;width:400px;text-align:right;top:561.73px;font-size:11.9px;line-height:13.29px;color:#4d6c9d;font-weight:normal;">0</div>
<div class="t" style="left:813.0px;width:400px;text-align:right;top:561.73px;font-size:11.9px;line-height:13.29px;color:#4d6c9d;font-weight:normal;">40,000</div>
<div class="t" style="left:880.0px;width:400px;text-align:right;top:561.73px;font-size:11.9px;line-height:13.29px;color:#4d6c9d;font-weight:normal;">0</div>
<div class="t" style="left:947.0px;width:400px;text-align:right;top:561.73px;font-size:11.9px;line-height:13.29px;color:#4d6c9d;font-weight:normal;">6,000</div>
<div class="t" style="left:1014.0px;width:400px;text-align:right;top:561.73px;font-size:11.9px;line-height:13.29px;color:#4d6c9d;font-weight:normal;">0</div>
<div class="t" style="left:1081.0px;width:400px;text-align:right;top:561.73px;font-size:11.9px;line-height:13.29px;color:#4d6c9d;font-weight:normal;">0</div>
<div class="t" style="left:1148.0px;width:400px;text-align:right;top:561.73px;font-size:11.9px;line-height:13.29px;color:#4d6c9d;font-weight:normal;">0</div>
<div class="t" style="left:1215.0px;width:400px;text-align:right;top:561.73px;font-size:11.9px;line-height:13.29px;color:#4d6c9d;font-weight:normal;">0</div>
<div class="t" style="left:612.0px;width:400px;text-align:right;top:579.73px;font-size:11.9px;line-height:13.29px;color:#4d6c9d;font-weight:normal;">9,000</div>
<div class="t" style="left:679.0px;width:400px;text-align:right;top:579.73px;font-size:11.9px;line-height:13.29px;color:#4d6c9d;font-weight:normal;">0</div>
<div class="t" style="left:746.0px;width:400px;text-align:right;top:579.73px;font-size:11.9px;line-height:13.29px;color:#4d6c9d;font-weight:normal;">0</div>
<div class="t" style="left:813.0px;width:400px;text-align:right;top:579.73px;font-size:11.9px;line-height:13.29px;color:#4d6c9d;font-weight:normal;">0</div>
<div class="t" style="left:880.0px;width:400px;text-align:right;top:579.73px;font-size:11.9px;line-height:13.29px;color:#4d6c9d;font-weight:normal;">37,500</div>
<div class="t" style="left:947.0px;width:400px;text-align:right;top:579.73px;font-size:11.9px;line-height:13.29px;color:#4d6c9d;font-weight:normal;">0</div>
<div class="t" style="left:1014.0px;width:400px;text-align:right;top:579.73px;font-size:11.9px;line-height:13.29px;color:#4d6c9d;font-weight:normal;">0</div>
<div class="t" style="left:1081.0px;width:400px;text-align:right;top:579.73px;font-size:11.9px;line-height:13.29px;color:#4d6c9d;font-weight:normal;">0</div>
<div class="t" style="left:1148.0px;width:400px;text-align:right;top:579.73px;font-size:11.9px;line-height:13.29px;color:#4d6c9d;font-weight:normal;">0</div>
<div class="t" style="left:1215.0px;width:400px;text-align:right;top:579.73px;font-size:11.9px;line-height:13.29px;color:#4d6c9d;font-weight:normal;">0</div>
<div class="t" style="left:612.0px;width:400px;text-align:right;top:597.73px;font-size:11.9px;line-height:13.29px;color:#2a4773;font-weight:bold;">9,000</div>
<div class="t" style="left:679.0px;width:400px;text-align:right;top:597.73px;font-size:11.9px;line-height:13.29px;color:#2a4773;font-weight:bold;">0</div>
<div class="t" style="left:746.0px;width:400px;text-align:right;top:597.73px;font-size:11.9px;line-height:13.29px;color:#2a4773;font-weight:bold;">60,000</div>
<div class="t" style="left:813.0px;width:400px;text-align:right;top:597.73px;font-size:11.9px;line-height:13.29px;color:#2a4773;font-weight:bold;">40,000</div>
<div class="t" style="left:880.0px;width:400px;text-align:right;top:597.73px;font-size:11.9px;line-height:13.29px;color:#2a4773;font-weight:bold;">37,500</div>
<div class="t" style="left:947.0px;width:400px;text-align:right;top:597.73px;font-size:11.9px;line-height:13.29px;color:#2a4773;font-weight:bold;">6,000</div>
<div class="t" style="left:1014.0px;width:400px;text-align:right;top:597.73px;font-size:11.9px;line-height:13.29px;color:#2a4773;font-weight:bold;">0</div>
<div class="t" style="left:1081.0px;width:400px;text-align:right;top:597.73px;font-size:11.9px;line-height:13.29px;color:#2a4773;font-weight:bold;">0</div>
<div class="t" style="left:1148.0px;width:400px;text-align:right;top:597.73px;font-size:11.9px;line-height:13.29px;color:#2a4773;font-weight:bold;">0</div>
<div class="t" style="left:1215.0px;width:400px;text-align:right;top:597.73px;font-size:11.9px;line-height:13.29px;color:#2a4773;font-weight:bold;">0</div>
<div class="t" style="left:612.0px;width:400px;text-align:right;top:615.73px;font-size:11.9px;line-height:13.29px;color:#2a4773;font-weight:bold;">14,206</div>
<div class="t" style="left:679.0px;width:400px;text-align:right;top:615.73px;font-size:11.9px;line-height:13.29px;color:#2a4773;font-weight:bold;">14,574</div>
<div class="t" style="left:746.0px;width:400px;text-align:right;top:615.73px;font-size:11.9px;line-height:13.29px;color:#2a4773;font-weight:bold;">14,786</div>
<div class="t" style="left:813.0px;width:400px;text-align:right;top:615.73px;font-size:11.9px;line-height:13.29px;color:#2a4773;font-weight:bold;">12,838</div>
<div class="t" style="left:880.0px;width:400px;text-align:right;top:615.73px;font-size:11.9px;line-height:13.29px;color:#2a4773;font-weight:bold;">11,148</div>
<div class="t" style="left:947.0px;width:400px;text-align:right;top:615.73px;font-size:11.9px;line-height:13.29px;color:#2a4773;font-weight:bold;">17,884</div>
<div class="t" style="left:1014.0px;width:400px;text-align:right;top:615.73px;font-size:11.9px;line-height:13.29px;color:#2a4773;font-weight:bold;">16,478</div>
<div class="t" style="left:1081.0px;width:400px;text-align:right;top:615.73px;font-size:11.9px;line-height:13.29px;color:#2a4773;font-weight:bold;">17,993</div>
<div class="t" style="left:1148.0px;width:400px;text-align:right;top:615.73px;font-size:11.9px;line-height:13.29px;color:#2a4773;font-weight:bold;">14,194</div>
<div class="t" style="left:1215.0px;width:400px;text-align:right;top:615.73px;font-size:11.9px;line-height:13.29px;color:#2a4773;font-weight:bold;">0</div>
<div class="t" style="left:612.0px;width:400px;text-align:right;top:633.73px;font-size:11.9px;line-height:13.29px;color:#4d6c9d;font-weight:normal;">-37%</div>
<div class="t" style="left:679.0px;width:400px;text-align:right;top:633.73px;font-size:11.9px;line-height:13.29px;color:#4d6c9d;font-weight:normal;">-100%</div>
<div class="t" style="left:746.0px;width:400px;text-align:right;top:633.73px;font-size:11.9px;line-height:13.29px;color:#4d6c9d;font-weight:normal;">306%</div>
<div class="t" style="left:813.0px;width:400px;text-align:right;top:633.73px;font-size:11.9px;line-height:13.29px;color:#4d6c9d;font-weight:normal;">212%</div>
<div class="t" style="left:880.0px;width:400px;text-align:right;top:633.73px;font-size:11.9px;line-height:13.29px;color:#4d6c9d;font-weight:normal;">236%</div>
<div class="t" style="left:947.0px;width:400px;text-align:right;top:633.73px;font-size:11.9px;line-height:13.29px;color:#4d6c9d;font-weight:normal;">-66%</div>
<div class="t" style="left:1014.0px;width:400px;text-align:right;top:633.73px;font-size:11.9px;line-height:13.29px;color:#4d6c9d;font-weight:normal;">-100%</div>
<div class="t" style="left:1081.0px;width:400px;text-align:right;top:633.73px;font-size:11.9px;line-height:13.29px;color:#4d6c9d;font-weight:normal;">-100%</div>
<div class="t" style="left:1148.0px;width:400px;text-align:right;top:633.73px;font-size:11.9px;line-height:13.29px;color:#4d6c9d;font-weight:normal;">-100%</div>
<div class="t" style="left:1215.0px;width:400px;text-align:right;top:633.73px;font-size:11.9px;line-height:13.29px;color:#4d6c9d;font-weight:normal;">0%</div>
<svg class="r" style="left:940px;top:630px" width="700" height="20" viewBox="940 630 700 20"><defs><linearGradient id="gg" x1="0" x2="1"><stop offset="0" stop-color="#9bdc8f"/><stop offset="0.5" stop-color="#3fae48"/><stop offset="1" stop-color="#2a8f35"/></linearGradient><linearGradient id="rg" x1="0" x2="1"><stop offset="0" stop-color="#fde0dc"/><stop offset="0.5" stop-color="#f79a90"/><stop offset="1" stop-color="#ee7469"/></linearGradient><linearGradient id="yg" x1="0" x2="0" y1="0" y2="1"><stop offset="0" stop-color="#fff0b8"/><stop offset="0.6" stop-color="#fdd46a"/><stop offset="1" stop-color="#f6c24a"/></linearGradient></defs><path d="M955.3 632.6 L961.5999999999999 639.8 L958.5999999999999 639.8 L958.5999999999999 646.8 L952.0 646.8 L952.0 639.8 L949.0 639.8 Z" fill="url(#gg)" stroke="#23862d" stroke-width="0.8"/><path d="M1022.15 632.6 L1028.45 639.8 L1025.45 639.8 L1025.45 646.8 L1018.85 646.8 L1018.85 639.8 L1015.85 639.8 Z" fill="url(#gg)" stroke="#23862d" stroke-width="0.8"/><path d="M1089.0 646.8 L1095.3 639.6 L1092.3 639.6 L1092.3 632.6 L1085.7 632.6 L1085.7 639.6 L1082.7 639.6 Z" fill="url(#rg)" stroke="#e0514a" stroke-width="0.8"/><path d="M1155.85 646.8 L1162.1499999999999 639.6 L1159.1499999999999 639.6 L1159.1499999999999 632.6 L1152.55 632.6 L1152.55 639.6 L1149.55 639.6 Z" fill="url(#rg)" stroke="#e0514a" stroke-width="0.8"/><path d="M1222.6999999999998 646.8 L1228.9999999999998 639.6 L1225.9999999999998 639.6 L1225.9999999999998 632.6 L1219.3999999999999 632.6 L1219.3999999999999 639.6 L1216.3999999999999 639.6 Z" fill="url(#rg)" stroke="#e0514a" stroke-width="0.8"/><path d="M1289.55 632.6 L1295.85 639.8 L1292.85 639.8 L1292.85 646.8 L1286.25 646.8 L1286.25 639.8 L1283.25 639.8 Z" fill="url(#gg)" stroke="#23862d" stroke-width="0.8"/><path d="M1356.3999999999999 632.6 L1362.6999999999998 639.8 L1359.6999999999998 639.8 L1359.6999999999998 646.8 L1353.1 646.8 L1353.1 639.8 L1350.1 639.8 Z" fill="url(#gg)" stroke="#23862d" stroke-width="0.8"/><path d="M1423.25 632.6 L1429.55 639.8 L1426.55 639.8 L1426.55 646.8 L1419.95 646.8 L1419.95 639.8 L1416.95 639.8 Z" fill="url(#gg)" stroke="#23862d" stroke-width="0.8"/><path d="M1490.1 632.6 L1496.3999999999999 639.8 L1493.3999999999999 639.8 L1493.3999999999999 646.8 L1486.8 646.8 L1486.8 639.8 L1483.8 639.8 Z" fill="url(#gg)" stroke="#23862d" stroke-width="0.8"/><path d="M1563.4499999999998 639.7 L1557.2499999999998 633.5 L1557.2499999999998 636.6 L1550.6499999999999 636.6 L1550.6499999999999 642.8 L1557.2499999999998 642.8 L1557.2499999999998 645.9 Z" fill="url(#yg)" stroke="#e8ad38" stroke-width="0.8"/><path d="M1630.3 639.7 L1624.1 633.5 L1624.1 636.6 L1617.5 636.6 L1617.5 642.8 L1624.1 642.8 L1624.1 645.9 Z" fill="url(#yg)" stroke="#e8ad38" stroke-width="0.8"/></svg>
<div class="r" style="left:130px;top:655.3px;width:1528px;height:77px;background:#dce6f1"></div>
<div class="r" style="left:130px;top:655.4px;width:1528px;height:2.1px;background:#141a22"></div>
<div class="r" style="left:130px;top:655.3px;width:2px;height:77px;background:#141a22"></div>
<div class="t" style="left:133.0px;top:660.23px;font-size:11.9px;line-height:13.29px;color:#4d6c9d;font-weight:normal;">Depreciation - Building</div>
<div class="t" style="left:357.7px;top:660.23px;font-size:11.9px;line-height:13.29px;color:#4d6c9d;font-weight:normal;">Balance Sheet</div>
<div class="t" style="left:612.0px;width:400px;text-align:right;top:660.23px;font-size:11.9px;line-height:13.29px;color:#4d6c9d;font-weight:normal;">0</div>
<div class="t" style="left:679.0px;width:400px;text-align:right;top:660.23px;font-size:11.9px;line-height:13.29px;color:#4d6c9d;font-weight:normal;">0</div>
<div class="t" style="left:746.0px;width:400px;text-align:right;top:660.23px;font-size:11.9px;line-height:13.29px;color:#4d6c9d;font-weight:normal;">0</div>
<div class="t" style="left:813.0px;width:400px;text-align:right;top:660.23px;font-size:11.9px;line-height:13.29px;color:#4d6c9d;font-weight:normal;">0</div>
<div class="t" style="left:880.0px;width:400px;text-align:right;top:660.23px;font-size:11.9px;line-height:13.29px;color:#4d6c9d;font-weight:normal;">0</div>
<div class="t" style="left:947.0px;width:400px;text-align:right;top:660.23px;font-size:11.9px;line-height:13.29px;color:#4d6c9d;font-weight:normal;">0</div>
<div class="t" style="left:1014.0px;width:400px;text-align:right;top:660.23px;font-size:11.9px;line-height:13.29px;color:#4d6c9d;font-weight:normal;">0</div>
<div class="t" style="left:1081.0px;width:400px;text-align:right;top:660.23px;font-size:11.9px;line-height:13.29px;color:#4d6c9d;font-weight:normal;">0</div>
<div class="t" style="left:1148.0px;width:400px;text-align:right;top:660.23px;font-size:11.9px;line-height:13.29px;color:#4d6c9d;font-weight:normal;">0</div>
<div class="t" style="left:1215.0px;width:400px;text-align:right;top:660.23px;font-size:11.9px;line-height:13.29px;color:#4d6c9d;font-weight:normal;">0</div>
<div class="t" style="left:133.0px;top:678.23px;font-size:11.9px;line-height:13.29px;color:#4d6c9d;font-weight:normal;">Depreciation - Building</div>
<div class="t" style="left:357.7px;top:678.23px;font-size:11.9px;line-height:13.29px;color:#4d6c9d;font-weight:normal;">Administration</div>
<div class="t" style="left:612.0px;width:400px;text-align:right;top:678.23px;font-size:11.9px;line-height:13.29px;color:#4d6c9d;font-weight:normal;">0</div>
<div class="t" style="left:679.0px;width:400px;text-align:right;top:678.23px;font-size:11.9px;line-height:13.29px;color:#4d6c9d;font-weight:normal;">0</div>
<div class="t" style="left:746.0px;width:400px;text-align:right;top:678.23px;font-size:11.9px;line-height:13.29px;color:#4d6c9d;font-weight:normal;">0</div>
<div class="t" style="left:813.0px;width:400px;text-align:right;top:678.23px;font-size:11.9px;line-height:13.29px;color:#4d6c9d;font-weight:normal;">0</div>
<div class="t" style="left:880.0px;width:400px;text-align:right;top:678.23px;font-size:11.9px;line-height:13.29px;color:#4d6c9d;font-weight:normal;">0</div>
<div class="t" style="left:947.0px;width:400px;text-align:right;top:678.23px;font-size:11.9px;line-height:13.29px;color:#4d6c9d;font-weight:normal;">0</div>
<div class="t" style="left:1014.0px;width:400px;text-align:right;top:678.23px;font-size:11.9px;line-height:13.29px;color:#4d6c9d;font-weight:normal;">0</div>
<div class="t" style="left:1081.0px;width:400px;text-align:right;top:678.23px;font-size:11.9px;line-height:13.29px;color:#4d6c9d;font-weight:normal;">0</div>
<div class="t" style="left:1148.0px;width:400px;text-align:right;top:678.23px;font-size:11.9px;line-height:13.29px;color:#4d6c9d;font-weight:normal;">0</div>
<div class="t" style="left:1215.0px;width:400px;text-align:right;top:678.23px;font-size:11.9px;line-height:13.29px;color:#4d6c9d;font-weight:normal;">0</div>
<div class="t" style="left:133.0px;top:696.23px;font-size:11.9px;line-height:13.29px;color:#4d6c9d;font-weight:normal;">Depreciation - Building</div>
<div class="t" style="left:357.7px;top:696.23px;font-size:11.9px;line-height:13.29px;color:#4d6c9d;font-weight:normal;">Finance &amp; Accounting</div>
<div class="t" style="left:612.0px;width:400px;text-align:right;top:696.23px;font-size:11.9px;line-height:13.29px;color:#4d6c9d;font-weight:normal;">0</div>
<div class="t" style="left:679.0px;width:400px;text-align:right;top:696.23px;font-size:11.9px;line-height:13.29px;color:#4d6c9d;font-weight:normal;">0</div>
<div class="t" style="left:746.0px;width:400px;text-align:right;top:696.23px;font-size:11.9px;line-height:13.29px;color:#4d6c9d;font-weight:normal;">0</div>
<div class="t" style="left:813.0px;width:400px;text-align:right;top:696.23px;font-size:11.9px;line-height:13.29px;color:#4d6c9d;font-weight:normal;">0</div>
<div class="t" style="left:880.0px;width:400px;text-align:right;top:696.23px;font-size:11.9px;line-height:13.29px;color:#4d6c9d;font-weight:normal;">0</div>
<div class="t" style="left:947.0px;width:400px;text-align:right;top:696.23px;font-size:11.9px;line-height:13.29px;color:#4d6c9d;font-weight:normal;">0</div>
<div class="t" style="left:1014.0px;width:400px;text-align:right;top:696.23px;font-size:11.9px;line-height:13.29px;color:#4d6c9d;font-weight:normal;">0</div>
<div class="t" style="left:1081.0px;width:400px;text-align:right;top:696.23px;font-size:11.9px;line-height:13.29px;color:#4d6c9d;font-weight:normal;">0</div>
<div class="t" style="left:1148.0px;width:400px;text-align:right;top:696.23px;font-size:11.9px;line-height:13.29px;color:#4d6c9d;font-weight:normal;">0</div>
<div class="t" style="left:1215.0px;width:400px;text-align:right;top:696.23px;font-size:11.9px;line-height:13.29px;color:#4d6c9d;font-weight:normal;">0</div>
<div class="t" style="left:133.0px;top:714.23px;font-size:11.9px;line-height:13.29px;color:#4d6c9d;font-weight:normal;">Depreciation - Building</div>
<div class="t" style="left:357.7px;top:714.23px;font-size:11.9px;line-height:13.29px;color:#4d6c9d;font-weight:normal;">Sales &amp; Marketing</div>
<div class="t" style="left:612.0px;width:400px;text-align:right;top:714.23px;font-size:11.9px;line-height:13.29px;color:#4d6c9d;font-weight:normal;">0</div>
<div class="t" style="left:679.0px;width:400px;text-align:right;top:714.23px;font-size:11.9px;line-height:13.29px;color:#4d6c9d;font-weight:normal;">0</div>
<div class="t" style="left:746.0px;width:400px;text-align:right;top:714.23px;font-size:11.9px;line-height:13.29px;color:#4d6c9d;font-weight:normal;">0</div>
<div class="t" style="left:813.0px;width:400px;text-align:right;top:714.23px;font-size:11.9px;line-height:13.29px;color:#4d6c9d;font-weight:normal;">0</div>
<div class="t" style="left:880.0px;width:400px;text-align:right;top:714.23px;font-size:11.9px;line-height:13.29px;color:#4d6c9d;font-weight:normal;">0</div>
<div class="t" style="left:947.0px;width:400px;text-align:right;top:714.23px;font-size:11.9px;line-height:13.29px;color:#4d6c9d;font-weight:normal;">0</div>
<div class="t" style="left:1014.0px;width:400px;text-align:right;top:714.23px;font-size:11.9px;line-height:13.29px;color:#4d6c9d;font-weight:normal;">0</div>
<div class="t" style="left:1081.0px;width:400px;text-align:right;top:714.23px;font-size:11.9px;line-height:13.29px;color:#4d6c9d;font-weight:normal;">0</div>
<div class="t" style="left:1148.0px;width:400px;text-align:right;top:714.23px;font-size:11.9px;line-height:13.29px;color:#4d6c9d;font-weight:normal;">0</div>
<div class="t" style="left:1215.0px;width:400px;text-align:right;top:714.23px;font-size:11.9px;line-height:13.29px;color:#4d6c9d;font-weight:normal;">0</div>
<div class="r" style="left:1658px;top:255px;width:2px;height:478px;background:#a9a9a9"></div>
<div class="r" style="left:1660px;top:255px;width:14px;height:478px;background:#dcdcdc"></div>
<div class="r" style="left:1662.5px;top:255.5px;width:12px;height:13.5px;background:#fff;border:1px solid #c4c4c4;box-sizing:border-box"></div>
<div class="r" style="left:1662.5px;top:269px;width:12px;height:62px;background:#fff;border:1px solid #c4c4c4;box-sizing:border-box"></div>
<div class="r" style="left:1662.5px;top:718px;width:12px;height:14px;background:#fff;border:1px solid #c4c4c4;box-sizing:border-box"></div>
<svg class="r" style="left:1660px;top:255px" width="14" height="480" viewBox="1660 255 14 480">
<path d="M1664.8 264.8 l3.5 -3.5 l3.5 3.5 Z" fill="#555"/><path d="M1664.8 723.3 l3.5 3.5 l3.5 -3.5 Z" fill="#666"/></svg>
<svg class="r" style="left:1638px;top:228px" width="36" height="22" viewBox="1638 228 36 22">
<rect x="1642.8" y="232.2" width="12.8" height="13" fill="none" stroke="#c9c9c9" stroke-width="1"/>
<path d="M1645.5 242.5 l6 -6 M1648 236.5 h3.5 v3.5" fill="none" stroke="#c4c4c4" stroke-width="1.4"/>
<path d="M1664.5 233 h10 M1664.5 237 h10 M1664.5 241 h10 M1664.5 245 h10 M1665 233 v12 M1669 233 v12" stroke="#cfcfcf" stroke-width="1"/>
</svg>
<div class="r" style="left:123px;top:732.5px;width:1551px;height:1px;background:#b5b5b5"></div>
<div class="r" style="left:123px;top:733.5px;width:1551px;height:26.5px;background:#e8e8e8"></div>
<div class="r" style="left:1044px;top:738.5px;width:614px;height:16.5px;background:#dadada"></div>
<div class="r" style="left:1044px;top:739.3px;width:15px;height:15.3px;background:#fff;border:1px solid #a9a9a9;border-radius:2px;box-sizing:border-box"></div>
<div class="r" style="left:1058.6px;top:739.3px;width:120px;height:15.3px;background:#fff;border:1px solid #a9a9a9;border-radius:2px;box-sizing:border-box"></div>
<div class="r" style="left:1643.5px;top:739.5px;width:14px;height:15px;background:#fff;border:1px solid #a9a9a9;border-radius:2px;box-sizing:border-box"></div>
<svg class="r" style="left:140px;top:735px" width="1530" height="24" viewBox="140 735 1530 24">
<path d="M153 743 l-3.2 3.3 l3.2 3.3 Z" fill="#c6c6c6"/><path d="M177.5 743 l3.2 3.3 l-3.2 3.3 Z" fill="#c6c6c6"/>
<rect x="221.5" y="737" width="1.2" height="19.5" fill="#9a9a9a"/>
<rect x="485.5" y="737" width="1.2" height="19.5" fill="#9a9a9a"/>
<circle cx="1029.8" cy="743" r="0.9" fill="#9a9a9a"/><circle cx="1029.8" cy="747.4" r="0.9" fill="#9a9a9a"/><circle cx="1029.8" cy="751.6" r="0.9" fill="#9a9a9a"/>
<path d="M1053.5 743.6 l-3.6 3.4 l3.6 3.4 Z" fill="#555"/>
<path d="M1648.6 743.6 l3.6 3.4 l-3.6 3.4 Z" fill="#555"/>
</svg>
<div class="r" style="left:328px;top:733.5px;width:69px;height:24px;background:#fff"></div>
<div class="r" style="left:328px;top:755.5px;width:69px;height:2px;background:#217346"></div>
<div class="t" style="left:235.3px;top:738.24px;font-size:13px;line-height:14.52px;color:#555;font-weight:normal;transform:scaleX(1.0024);transform-origin:left center;">Assumptions</div>
<div class="t" style="left:340.0px;top:738.24px;font-size:13px;line-height:14.52px;color:#217346;font-weight:bold;transform:scaleX(1.0152);transform-origin:left center;">Capital</div>
<div class="t" style="left:410.0px;top:738.24px;font-size:13px;line-height:14.52px;color:#555;font-weight:normal;transform:scaleX(1.0035);transform-origin:left center;">Directions</div>
<div class="r" style="left:123px;top:760px;width:1556px;height:26px;background:#2f3843"></div>
<div class="t" style="left:778.0px;top:769.93px;font-size:14px;line-height:15.64px;color:#e6e6e6;font-weight:normal;transform:scaleX(1.1105);transform-origin:left center;">Spreading and Line item details</div>
<svg class="r" style="left:1000px;top:765px" width="24" height="16" viewBox="1000 765 24 16">
<path d="M1007.3 777 l5.2 -5.6 l5.2 5.6" fill="none" stroke="#fff" stroke-width="2.4"/></svg>
<div id="frame"></div>
</body></html>
